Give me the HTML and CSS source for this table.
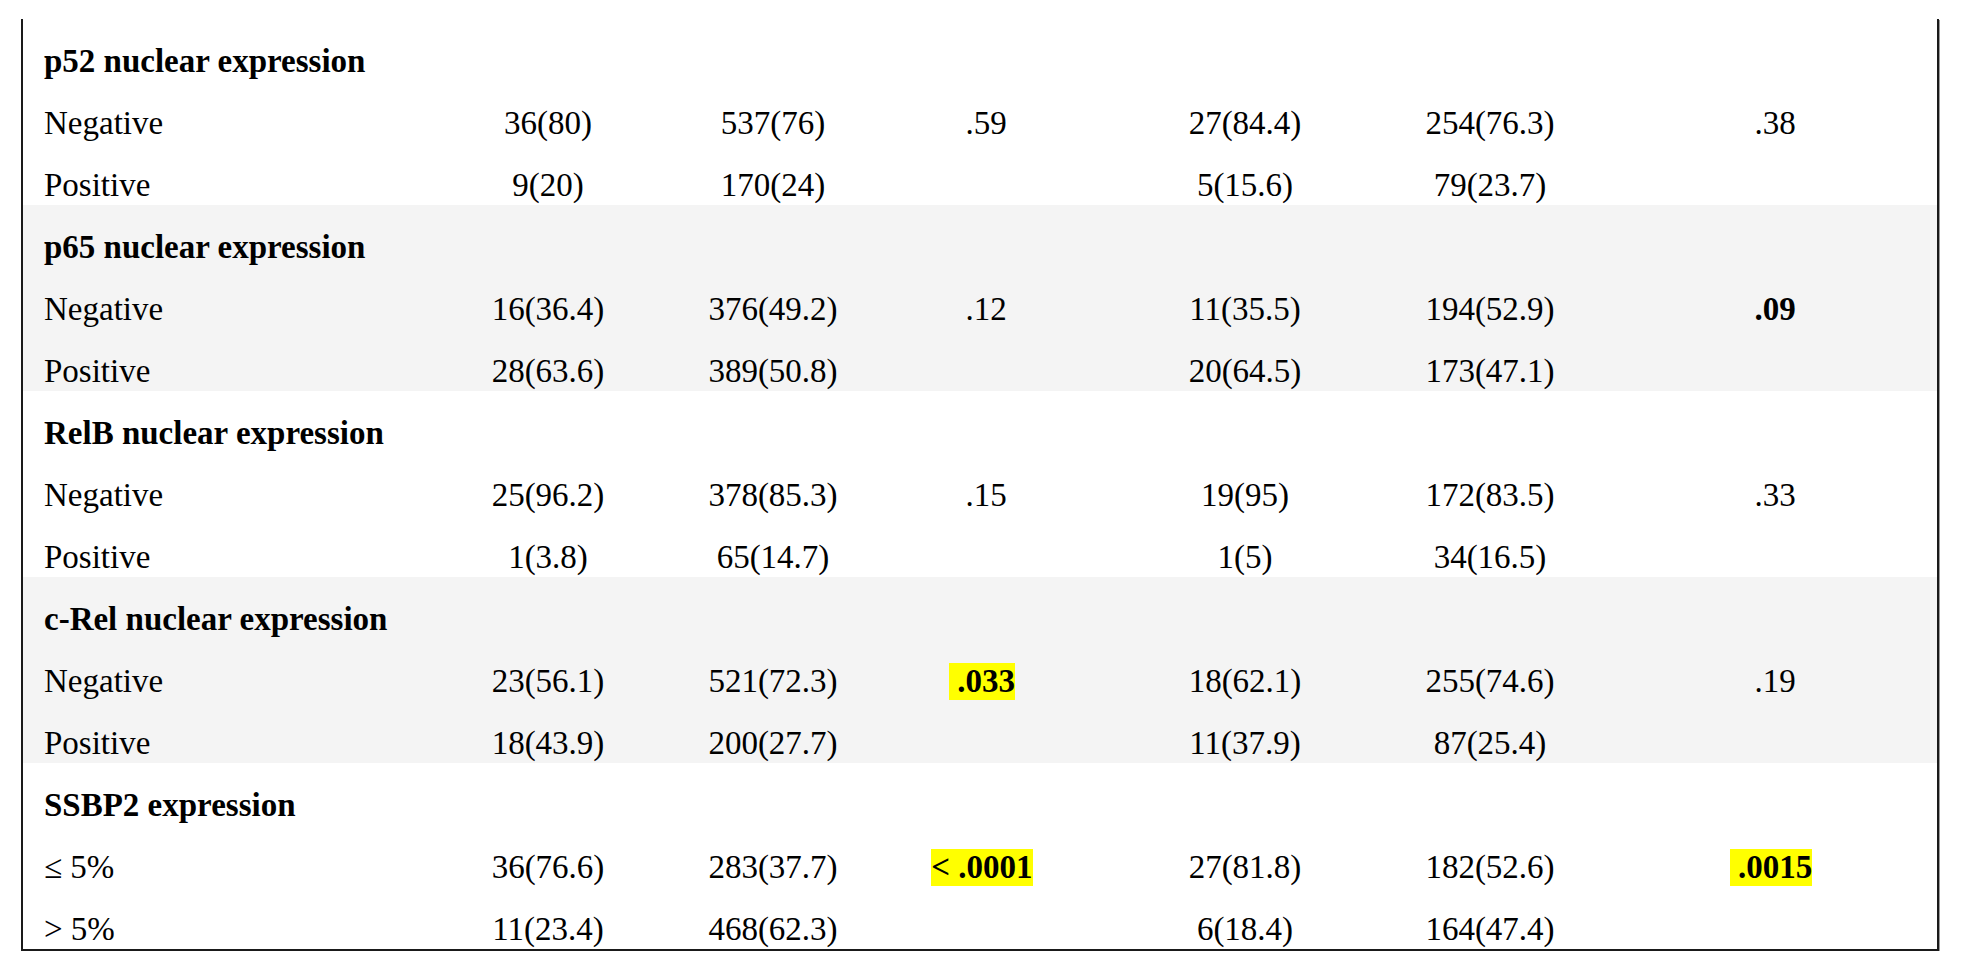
FILE: index.html
```html
<!DOCTYPE html>
<html>
<head>
<meta charset="utf-8">
<link rel="stylesheet" href="styles.css">
</head>
<body>
<div class="table">
  <div class="group">
    <div class="row head">p52 nuclear expression</div>
    <div class="row"><span class="lbl">Negative</span><span>36(80)</span><span>537(76)</span><span>.59</span><span>27(84.4)</span><span>254(76.3)</span><span>.38</span></div>
    <div class="row"><span class="lbl">Positive</span><span>9(20)</span><span>170(24)</span><span></span><span>5(15.6)</span><span>79(23.7)</span><span></span></div>
  </div>
  <div class="group alt">
    <div class="row head">p65 nuclear expression</div>
    <div class="row"><span class="lbl">Negative</span><span>16(36.4)</span><span>376(49.2)</span><span>.12</span><span>11(35.5)</span><span>194(52.9)</span><span class="b">.09</span></div>
    <div class="row"><span class="lbl">Positive</span><span>28(63.6)</span><span>389(50.8)</span><span></span><span>20(64.5)</span><span>173(47.1)</span><span></span></div>
  </div>
  <div class="group">
    <div class="row head">RelB nuclear expression</div>
    <div class="row"><span class="lbl">Negative</span><span>25(96.2)</span><span>378(85.3)</span><span>.15</span><span>19(95)</span><span>172(83.5)</span><span>.33</span></div>
    <div class="row"><span class="lbl">Positive</span><span>1(3.8)</span><span>65(14.7)</span><span></span><span>1(5)</span><span>34(16.5)</span><span></span></div>
  </div>
  <div class="group alt">
    <div class="row head">c-Rel nuclear expression</div>
    <div class="row"><span class="lbl">Negative</span><span>23(56.1)</span><span>521(72.3)</span><span class="b"><span class="hl">&nbsp;.033</span>&nbsp;</span><span>18(62.1)</span><span>255(74.6)</span><span>.19</span></div>
    <div class="row"><span class="lbl">Positive</span><span>18(43.9)</span><span>200(27.7)</span><span></span><span>11(37.9)</span><span>87(25.4)</span><span></span></div>
  </div>
  <div class="group">
    <div class="row head">SSBP2 expression</div>
    <div class="row"><span class="lbl">&le; 5%</span><span>36(76.6)</span><span>283(37.7)</span><span class="b"><span class="hl">&lt; .0001</span>&nbsp;</span><span>27(81.8)</span><span>182(52.6)</span><span class="b"><span class="hl">&nbsp;.0015</span>&nbsp;</span></div>
    <div class="row"><span class="lbl">&gt; 5%</span><span>11(23.4)</span><span>468(62.3)</span><span></span><span>6(18.4)</span><span>164(47.4)</span><span></span></div>
  </div>
</div>
</body>
</html>
```
FILE: styles.css
```css
html, body {
  margin: 0;
  padding: 0;
  background: #ffffff;
}
body {
  font-family: "Liberation Serif", "Times New Roman", serif;
  font-size: 33px;
  color: #000;
}
.table {
  margin: 19px 0 0 21px;
  width: 1914px;
  border-left: 2px solid #1a1a1a;
  border-right: 2px solid #1a1a1a;
  border-bottom: 2px solid #1a1a1a;
  box-shadow: 1px 1px 0 #9a9a9a;
}
.group.alt {
  background: #f4f4f4;
}
.row {
  display: grid;
  grid-template-columns: 376px 298px 152px 274px 244px 246px 324px;
  height: 39px;
  padding-top: 23px;
  line-height: 39px;
  text-align: center;
  white-space: nowrap;
}
.row.head {
  display: block;
  text-align: left;
  padding-left: 21px;
  font-weight: bold;
}
.row .lbl {
  text-align: left;
  padding-left: 21px;
}
.b {
  font-weight: bold;
}
.hl {
  background: #ffff00;
  padding-bottom: 1px;
}
```
